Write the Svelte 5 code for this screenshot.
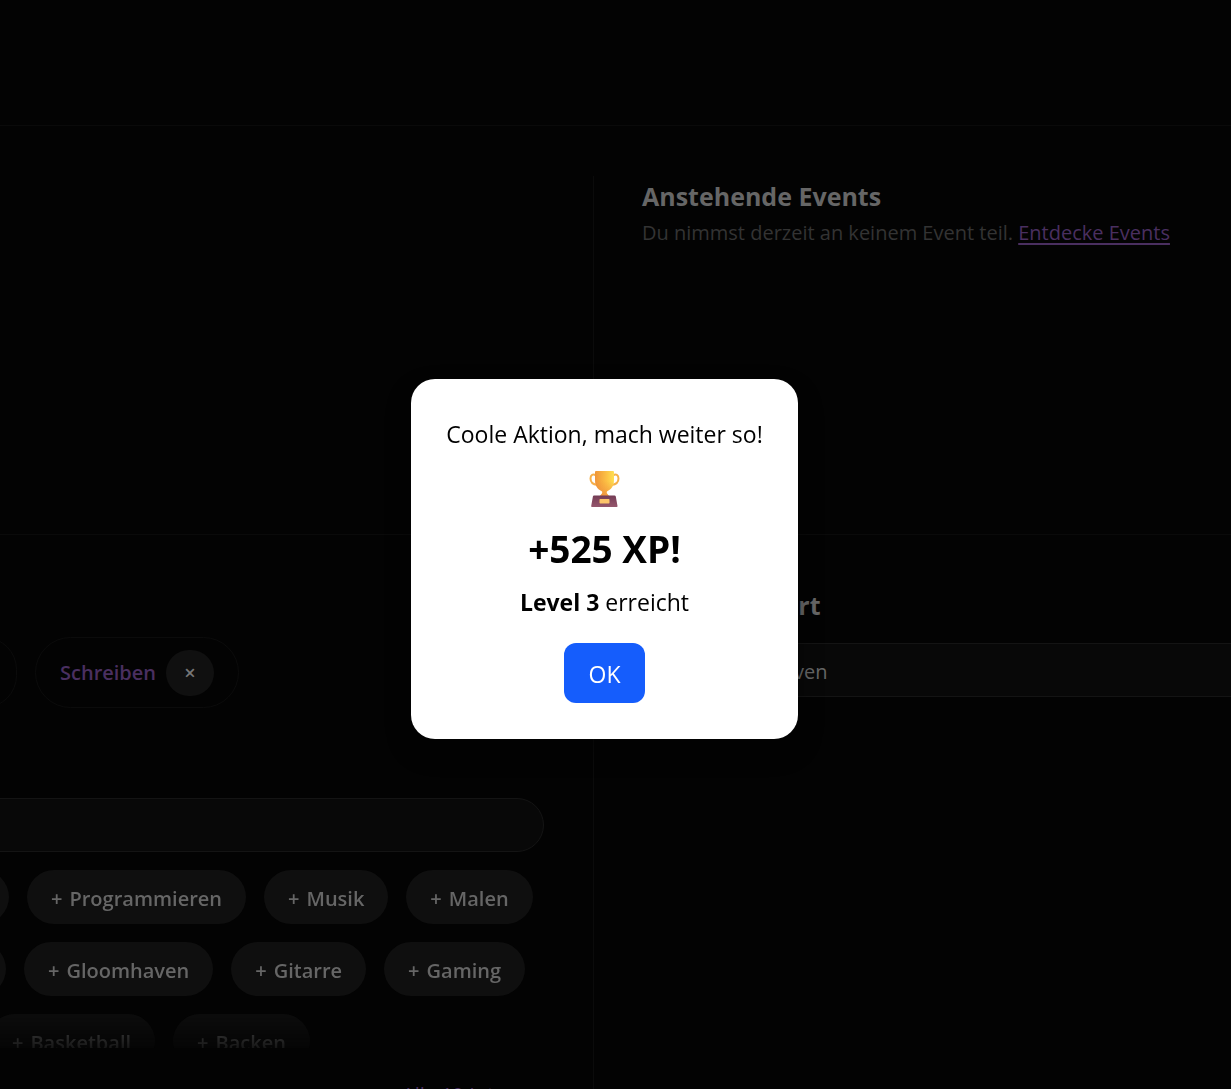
<script lang="ts">
  const suggestions = [
    { cut: 57, tags: ['Programmieren', 'Musik', 'Malen'] },
    { cut: 54, tags: ['Gloomhaven', 'Gitarre', 'Gaming'] },
    { cut: 18, tags: ['Basketball', 'Backen'] },
  ]

  let search = $state('')
  let location = $state('27472 Cuxhaven')
  let open = $state(true)
</script>

<div class="page">
  <header></header>

  <main>
    <section class="cell left top"></section>

    <section class="cell right top">
      <h2>Anstehende Events</h2>
      <p>Du nimmst derzeit an keinem Event teil. <a href="#events">Entdecke Events</a></p>
    </section>

    <section class="cell left interests">
      <div class="row selected">
        <span class="tag rest"></span>
        <span class="tag">
          Schreiben
          <button class="remove" aria-label="Schreiben entfernen">×</button>
        </span>
      </div>

      <input class="search" type="text" aria-label="Interessen suchen" bind:value={search} />

      <div class="suggestions">
        {#each suggestions as line}
          <div class="row">
            <span class="chip rest" style="width: {line.cut}px"></span>
            {#each line.tags as tag}
              <button class="chip"><span>+</span>{tag}</button>
            {/each}
          </div>
        {/each}
      </div>

      <a class="more" href="#interests">Alle 19 Interessen</a>
    </section>

    <section class="cell right location">
      <h2><label for="location">Mein Standort</label></h2>
      <input id="location" type="text" bind:value={location} />
    </section>
  </main>

  {#if open}
    <div class="overlay">
      <div class="modal" role="dialog" aria-modal="true" aria-labelledby="xp">
        <p>Coole Aktion, mach weiter so!</p>
        <svg class="trophy" viewBox="0 0 32 38" aria-hidden="true">
          <defs>
            <linearGradient id="cup" x1="0" y1="0" x2="1" y2="0">
              <stop offset="0" stop-color="#ef9438" />
              <stop offset="0.6" stop-color="#fcc044" />
              <stop offset="1" stop-color="#ffe052" />
            </linearGradient>
            <linearGradient id="shade" x1="0" y1="0" x2="0" y2="1">
              <stop offset="0.4" stop-color="#f08a3c" stop-opacity="0" />
              <stop offset="1" stop-color="#ee8b40" stop-opacity="0.7" />
            </linearGradient>
            <linearGradient id="base" x1="0" y1="0" x2="0" y2="1">
              <stop offset="0" stop-color="#743c55" />
              <stop offset="1" stop-color="#95566c" />
            </linearGradient>
          </defs>
          <path
            d="M7 5.500C4 3.500 1.500 5 1.500 8.500c0 4 3 6 7 6.500M24 5.500c3-2 5.500-.5 5.500 3 0 4-3 6-7 6.500"
            fill="none"
            stroke="#f6b04a"
            stroke-width="2"
          />
          <path
            d="M6 2q0-1 1-1h17q1 0 1 1v8c0 6-3 9.500-6.500 11-1 .5-1 1.500-.5 2.500l2 2.500h-9l2-2.500c.5-1 .5-2-.5-2.500C9 19.500 6 16 6 10z"
            fill="url(#cup)"
          />
          <path
            d="M6 2q0-1 1-1h17q1 0 1 1v8c0 6-3 9.500-6.500 11-1 .5-1 1.500-.5 2.500l2 2.500h-9l2-2.500c.5-1 .5-2-.5-2.500C9 19.500 6 16 6 10z"
            fill="url(#shade)"
          />
          <path d="M5 25.500h20.500q1 0 1.300 1L28.500 36q.2 1-.8 1H3q-1 0-.8-1l1.700-9.500q.2-1 1.100-1z" fill="url(#base)" />
          <rect x="10.500" y="29" width="10" height="4.500" rx=".7" fill="#fcc46a" />
        </svg>
        <h1 id="xp">+525 XP!</h1>
        <p><strong>Level 3</strong> erreicht</p>
        <button class="ok" onclick={() => (open = false)}>OK</button>
      </div>
    </div>
  {/if}
</div>

<style>
  :global(body) {
    margin: 0;
    background: #030303;
  }

  .page {
    display: flex;
    flex-direction: column;
    height: 100vh;
    overflow: hidden;
    background: #030303;
    color: #666666;
    font-family: 'Segoe UI', 'Open Sans', 'Noto Sans', sans-serif;
    font-size: 20px;
  }

  .page * {
    box-sizing: border-box;
  }

  button,
  input {
    font: inherit;
    color: inherit;
  }

  h1,
  h2,
  p {
    margin: 0;
  }

  header {
    flex: none;
    height: 126px;
    border-bottom: 1px solid #0a0a0a;
  }

  main {
    flex: 1;
    display: grid;
    grid-template-columns: 594px minmax(0, 1fr);
    grid-template-rows: 359px 1fr;
    margin-top: 50px;
    min-height: 0;
  }

  .cell {
    min-width: 0;
  }

  .top {
    border-bottom: 1px solid #0a0a0a;
  }

  .left {
    border-right: 1px solid #0b0b0b;
    overflow: hidden;
  }

  .right {
    padding-left: 48px;
  }

  h2 {
    font-size: 25px;
    font-weight: 700;
    line-height: 40px;
  }

  .right p {
    color: #333333;
    line-height: 34px;
    white-space: nowrap;
  }

  a {
    color: #4a2f60;
    text-decoration-thickness: 2px;
    text-underline-offset: 3px;
  }

  .interests {
    padding: 102px 49px 0 0;
  }

  .row {
    display: flex;
    gap: 18px;
    margin-left: -48px;
  }

  .tag {
    display: flex;
    align-items: center;
    gap: 10px;
    height: 71px;
    padding: 0 24px;
    border: 1px solid #0b0b0b;
    border-radius: 36px;
    color: #4a2f60;
    font-weight: 600;
  }

  .tag.rest {
    width: 65px;
  }

  .remove {
    width: 48px;
    height: 46px;
    padding: 0;
    border: none;
    border-radius: 24px;
    background: #101010;
    color: #777777;
    cursor: pointer;
  }

  .search {
    display: block;
    width: calc(100% + 48px);
    height: 54px;
    margin: 90px 0 18px -48px;
    padding: 0 24px;
    background: #080808;
    border: 1px solid #141414;
    border-radius: 27px;
  }

  .suggestions {
    display: flex;
    flex-direction: column;
    gap: 18px;
    height: 178px;
    overflow: hidden;
    mask-image: linear-gradient(#000 0 130px, transparent 190px);
  }

  .chip {
    flex: none;
    display: flex;
    align-items: center;
    gap: 7px;
    height: 54px;
    padding: 2px 24px 0;
    border: none;
    border-radius: 27px;
    background: #0f0f0f;
    font-weight: 600;
    cursor: pointer;
  }

  .chip.rest {
    padding: 0;
  }

  .more {
    display: block;
    margin: 33px 0 0 402px;
    line-height: 28px;
    text-decoration: none;
    white-space: nowrap;
  }

  .location {
    padding-top: 50px;
  }

  .location input {
    display: block;
    width: 100%;
    height: 54px;
    margin-top: 18px;
    padding: 2px 30px 0;
    background: #080808;
    border: 1px solid #141414;
    border-right: none;
    border-radius: 27px 0 0 27px;
  }

  .overlay {
    position: fixed;
    inset: 29px 22px 0 0;
    display: grid;
    place-items: center;
  }

  .modal {
    display: flex;
    flex-direction: column;
    align-items: center;
    padding: 37px 35px 36px;
    border-radius: 24px;
    background: #ffffff;
    box-shadow: 0 12px 24px rgba(0, 0, 0, 0.4);
    color: #000000;
    font-size: 23px;
    line-height: 36px;
  }

  .trophy {
    width: 32px;
    height: 38px;
    margin: 18px 0 14px;
  }

  h1 {
    font-size: 37px;
    font-weight: 700;
    line-height: 54px;
    margin-bottom: 8px;
  }

  .ok {
    height: 60px;
    margin-top: 23px;
    padding: 2px 25px 0;
    border: none;
    border-radius: 12px;
    background: #155dfc;
    color: #ffffff;
    cursor: pointer;
  }
</style>
